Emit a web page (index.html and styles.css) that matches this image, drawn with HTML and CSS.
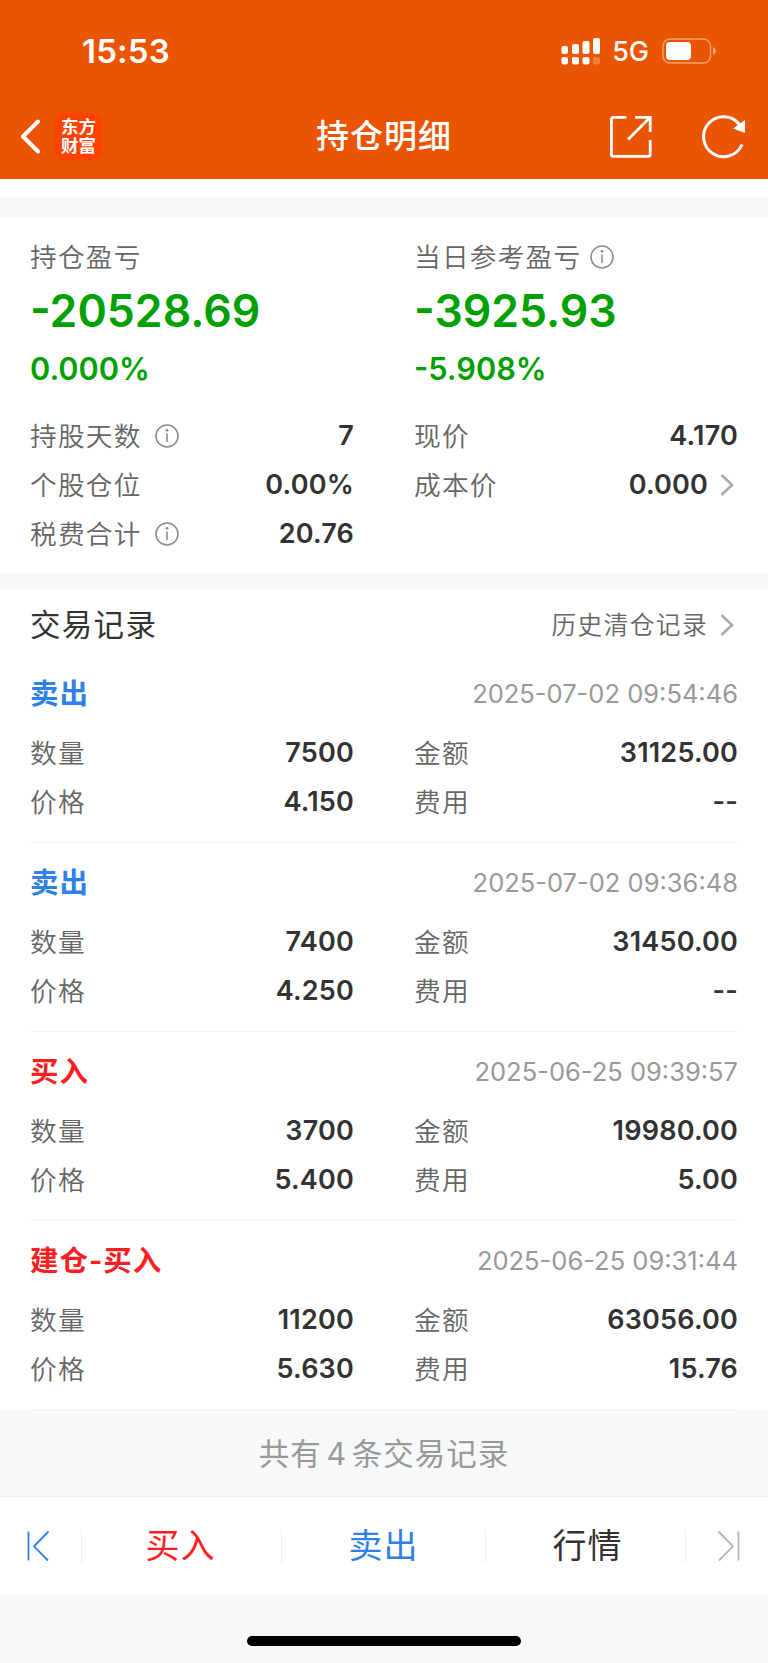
FILE: index.html
```html
<!DOCTYPE html>
<html lang="zh-CN">
<head>
  <meta charset="UTF-8">
  <meta name="viewport" content="width=device-width, initial-scale=1.0">
  <title>持仓明细</title>
  <link rel="stylesheet" href="styles.css">
</head>
<body>
  <header class="header">
    <div class="status-bar">
      <span class="time">15:53</span>
      <div class="status-icons">
        <svg width="40" height="30" viewBox="0 0 40 30" fill="#fff">
          <rect x="0.5" y="10" width="6.5" height="8" rx="2"/>
          <rect x="11" y="8" width="7" height="10" rx="2"/>
          <rect x="21.5" y="5" width="7" height="13" rx="2"/>
          <rect x="32" y="2" width="7" height="16" rx="2"/>
          <rect x="0.5" y="21" width="6.5" height="7.5" rx="2"/>
          <rect x="11" y="21" width="7" height="7.5" rx="2"/>
          <rect x="21.5" y="21" width="7" height="7.5" rx="2"/>
          <rect x="32" y="21" width="7" height="7.5" rx="2" opacity="0.25"/>
        </svg>
        <span class="network">5G</span>
        <svg width="56" height="26" viewBox="0 0 56 26">
          <rect x="1" y="1" width="47.5" height="24" rx="7" fill="none" stroke="#fff" stroke-width="1.4" opacity="0.45"/>
          <rect x="4" y="4" width="25" height="18" rx="4" fill="#fff"/>
          <path d="M51 9q3 1.5 3 4t-3 4z" fill="#fff" opacity="0.5"/>
        </svg>
      </div>
    </div>
    <nav class="nav">
      <div class="nav-left">
        <svg width="20" height="36" viewBox="0 0 20 36" fill="none" stroke="#fff" stroke-width="4" stroke-linecap="round" stroke-linejoin="round">
          <path d="M17 2.500L2 17.500L17 32.500"/>
        </svg>
        <span class="logo">东方<br>财富</span>
      </div>
      <h1 class="title">持仓明细</h1>
      <div class="nav-right">
        <svg width="44" height="44" viewBox="0 0 44 44" fill="none" stroke="#fff" stroke-width="2.8">
          <path d="M17.500 2.400H4.400Q2.400 2.400 2.400 4.400V39.300Q2.400 41.300 4.400 41.300H39.200Q41.200 41.300 41.200 39.300V25M26 2.400H41.200V17M41 2.600L19 24.500"/>
        </svg>
        <svg width="46" height="46" viewBox="0 0 46 46" fill="none" stroke="#fff" stroke-width="3">
          <path d="M41 30.500A20 20 0 1 1 38.500 10.500"/>
          <path d="M44 6V19L32 14.500z" fill="#fff" stroke="none"/>
        </svg>
      </div>
    </nav>
  </header>

  <main>
    <!-- Profit summary -->
    <section class="summary">
      <div class="column">
        <div class="label profit-label">持仓盈亏</div>
        <div class="profit">-20528.69</div>
        <div class="percent">0.000%</div>
        <div class="row">
          <span class="label">持股天数</span>
          <svg class="info" viewBox="0 0 24 24"><circle cx="12" cy="12" r="11"/><path d="M12 9.500V18"/><circle class="dot" cx="12" cy="6.300" r="1.400"/></svg>
          <span class="value">7</span>
        </div>
        <div class="row">
          <span class="label">个股仓位</span>
          <span class="value">0.00%</span>
        </div>
        <div class="row">
          <span class="label">税费合计</span>
          <svg class="info" viewBox="0 0 24 24"><circle cx="12" cy="12" r="11"/><path d="M12 9.500V18"/><circle class="dot" cx="12" cy="6.300" r="1.400"/></svg>
          <span class="value">20.76</span>
        </div>
      </div>
      <div class="column">
        <div class="label profit-label">当日参考盈亏
          <svg class="info" viewBox="0 0 24 24"><circle cx="12" cy="12" r="11"/><path d="M12 9.500V18"/><circle class="dot" cx="12" cy="6.300" r="1.400"/></svg>
        </div>
        <div class="profit">-3925.93</div>
        <div class="percent">-5.908%</div>
        <div class="row">
          <span class="label">现价</span>
          <span class="value">4.170</span>
        </div>
        <div class="row">
          <span class="label">成本价</span>
          <span class="value">0.000</span>
          <svg class="chevron" viewBox="0 0 14 24"><path d="M1.500 2L12 12L1.500 22"/></svg>
        </div>
      </div>
    </section>

    <!-- Trade records -->
    <section class="records">
      <div class="records-head">
        <h2>交易记录</h2>
        <a class="history">历史清仓记录</a>
        <svg class="chevron" viewBox="0 0 14 24"><path d="M1.500 2L12 12L1.500 22"/></svg>
      </div>

      <article class="record">
        <div class="record-head">
          <span class="type sell">卖出</span>
          <span class="date">2025-07-02 09:54:46</span>
        </div>
        <div class="record-grid">
          <div class="row"><span class="label">数量</span><span class="value">7500</span></div>
          <div class="row"><span class="label">金额</span><span class="value">31125.00</span></div>
          <div class="row"><span class="label">价格</span><span class="value">4.150</span></div>
          <div class="row"><span class="label">费用</span><span class="value">--</span></div>
        </div>
      </article>

      <article class="record">
        <div class="record-head">
          <span class="type sell">卖出</span>
          <span class="date">2025-07-02 09:36:48</span>
        </div>
        <div class="record-grid">
          <div class="row"><span class="label">数量</span><span class="value">7400</span></div>
          <div class="row"><span class="label">金额</span><span class="value">31450.00</span></div>
          <div class="row"><span class="label">价格</span><span class="value">4.250</span></div>
          <div class="row"><span class="label">费用</span><span class="value">--</span></div>
        </div>
      </article>

      <article class="record">
        <div class="record-head">
          <span class="type buy">买入</span>
          <span class="date">2025-06-25 09:39:57</span>
        </div>
        <div class="record-grid">
          <div class="row"><span class="label">数量</span><span class="value">3700</span></div>
          <div class="row"><span class="label">金额</span><span class="value">19980.00</span></div>
          <div class="row"><span class="label">价格</span><span class="value">5.400</span></div>
          <div class="row"><span class="label">费用</span><span class="value">5.00</span></div>
        </div>
      </article>

      <article class="record">
        <div class="record-head">
          <span class="type buy">建仓-买入</span>
          <span class="date">2025-06-25 09:31:44</span>
        </div>
        <div class="record-grid">
          <div class="row"><span class="label">数量</span><span class="value">11200</span></div>
          <div class="row"><span class="label">金额</span><span class="value">63056.00</span></div>
          <div class="row"><span class="label">价格</span><span class="value">5.630</span></div>
          <div class="row"><span class="label">费用</span><span class="value">15.76</span></div>
        </div>
      </article>
    </section>

    <p class="total">共有 4 条交易记录</p>
  </main>

  <footer class="footer">
    <div class="tabs">
      <div class="tab first">
        <svg width="24" height="32" viewBox="0 0 24 32" fill="none" stroke="#2f80e7" stroke-width="1.800">
          <path d="M2.500 1.500V30.500M22.500 1.500L8 16.300L22 30.500"/>
        </svg>
      </div>
      <div class="tab buy">买入</div>
      <div class="tab sell">卖出</div>
      <div class="tab quote">行情</div>
      <div class="tab last">
        <svg width="24" height="32" viewBox="0 0 24 32" fill="none" stroke="#b5b5b5" stroke-width="1.800">
          <path d="M21.500 1.500V30.500M1.500 1.500L16 16.300L2 30.500"/>
        </svg>
      </div>
    </div>
    <div class="home-bar"></div>
  </footer>
</body>
</html>
```
FILE: styles.css
```css
/* General styling */
* {
  box-sizing: border-box;
}
body {
  margin: 0;
  font-family: Inter, "Noto Sans CJK SC", sans-serif;
  line-height: 1.2;
  background-color: #f6f8fa;
  color: #333;
}
svg {
  display: block;
  flex-shrink: 0;
}

/* Header */
.header {
  height: 179px;
  background-color: #ea5504;
  color: #fff;
}
.status-bar {
  display: flex;
  justify-content: space-between;
  align-items: center;
  height: 94px;
  padding: 9px 50px 0 82px;
}
.time {
  font-size: 33px;
  font-weight: 600;
  letter-spacing: 0.2px;
}
.status-icons {
  display: flex;
  align-items: center;
}
.network {
  margin: 0 13px 0 11px;
  padding-top: 2px;
  font-size: 27px;
  font-weight: 500;
}
.nav {
  display: flex;
  align-items: center;
  height: 85px;
  padding: 0 21px;
}
.nav-left,
.nav-right {
  display: flex;
  align-items: center;
  width: 140px;
}
.nav-right {
  justify-content: space-between;
  width: 138px;
  margin-left: 2px;
}
.logo {
  width: 47px;
  height: 47px;
  margin-left: 14px;
  padding-top: 4px;
  border-radius: 9px;
  background-color: #ff4200;
  font-size: 17.5px;
  font-weight: 700;
  line-height: 19px;
  text-align: center;
}
.title {
  flex: 1;
  margin: 0;
  font-size: 33px;
  font-weight: 500;
  letter-spacing: 1px;
  text-align: center;
}

/* Profit summary */
main {
  padding-top: 18px;
  background-color: #fff;
}
.summary {
  display: grid;
  grid-template-columns: 1fr 1fr;
  gap: 60px;
  height: 376px;
  padding: 20px 30px 15px;
  border-top: 20px solid #f6f8fa;
}
.label {
  color: #666;
  font-size: 26.7px;
  font-weight: 350;
  letter-spacing: 1.2px;
}
.profit-label {
  display: flex;
  align-items: center;
  height: 40px;
}
.profit-label .info {
  margin-left: 9px;
}
.profit {
  color: #00a000;
  font-size: 44.6px;
  font-weight: 600;
  line-height: 68px;
}
.percent {
  margin-bottom: 18px;
  color: #00a000;
  font-size: 30.7px;
  font-weight: 600;
  line-height: 48px;
}
.row {
  display: flex;
  align-items: center;
  height: 49px;
}
.row .info {
  margin-left: 13px;
}
.row .label,
.row .value {
  padding-top: 2px;
}
.value {
  margin-left: auto;
  font-size: 27px;
  font-weight: 600;
  letter-spacing: 0.2px;
}
.info {
  width: 24px;
  height: 24px;
  fill: none;
  stroke: #8c8c8c;
  stroke-width: 1.6;
}
.info .dot {
  fill: #8c8c8c;
  stroke: none;
}
.chevron {
  width: 14px;
  height: 24px;
  margin: 0 4px 0 12px;
  fill: none;
  stroke: #aaa;
  stroke-width: 2.6;
}

/* Trade records */
.records {
  padding: 0 30px;
  border-top: 16px solid #f6f8fa;
}
.records-head {
  display: flex;
  align-items: center;
  height: 65px;
  padding-top: 7px;
}
.records-head h2 {
  margin: 0;
  font-size: 30.5px;
  font-weight: 400;
  letter-spacing: 1.3px;
}
.history {
  margin-left: auto;
  padding-top: 1px;
  color: #666;
  font-size: 24.7px;
  font-weight: 350;
  letter-spacing: 1.4px;
}
.record {
  height: 189px;
  padding-top: 22px;
  border-bottom: 1px solid #f5f5f5;
}
.record-head {
  display: flex;
  justify-content: space-between;
  align-items: center;
  height: 36px;
  margin-bottom: 16px;
}
.record-grid {
  display: grid;
  grid-template-columns: 1fr 1fr;
  column-gap: 60px;
}
.type {
  font-size: 28.5px;
  font-weight: 700;
  letter-spacing: 1px;
}
.date {
  color: #999;
  font-size: 25.5px;
}
.buy {
  color: #fb1e22;
}
.sell {
  color: #2f80e7;
}
.total {
  height: 87px;
  margin: 0;
  border-bottom: 1px solid #eee;
  background-color: #f6f8fa;
  color: #999;
  font-size: 30.5px;
  letter-spacing: 1px;
  line-height: 87px;
  text-align: center;
  word-spacing: -5px;
}

/* Bottom tabs */
.tabs {
  display: grid;
  grid-template-columns: 82px 200px 204px 200px 82px;
  align-items: center;
  height: 98px;
  background-color: #fff;
}
.tab {
  display: flex;
  justify-content: center;
  align-items: center;
  height: 33px;
  border-right: 1px solid #eee;
  font-size: 34px;
  letter-spacing: 1px;
}
.tab.first {
  padding-right: 5px;
}
.tab.buy {
  padding-right: 2px;
}
.tab.quote {
  padding-left: 4px;
}
.tab.last {
  padding-left: 3px;
  border-right: none;
}
.home-bar {
  width: 274px;
  height: 10px;
  margin: 41px auto 17px;
  border-radius: 5px;
  background-color: #000;
}
```
